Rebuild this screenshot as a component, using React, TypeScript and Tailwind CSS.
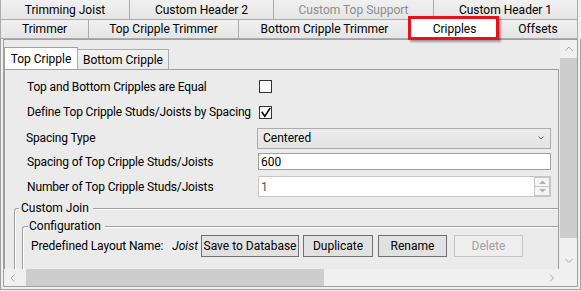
import React from 'react';

type TabDef = { label: string; w: string; disabled?: boolean; selected?: boolean };

const row1: TabDef[] = [
  { label: 'Trimming Joist', w: 'w-[130px]' },
  { label: 'Custom Header 2', w: 'w-[145px]' },
  { label: 'Custom Top Support', w: 'w-[161px]', disabled: true },
  { label: 'Custom Header 1', w: 'w-[145px]' },
];

const row2: TabDef[] = [
  { label: 'Trimmer', w: 'w-[89px]' },
  { label: 'Top Cripple Trimmer', w: 'w-[151px]' },
  { label: 'Bottom Cripple Trimmer', w: 'w-[173px]' },
  { label: 'Cripples', w: 'w-[89px]', selected: true },
  { label: 'Offsets', w: 'w-[80px]' },
];

const OuterTab = ({ tab, first }: { tab: TabDef; first: boolean }) => {
  if (tab.selected) {
    return (
      <div
        className={`${tab.w} ${first ? '' : '-ml-px'} relative z-10 h-[22px] shrink-0 border border-b-0 border-[#acacac] bg-white flex items-center justify-center pt-[1px]`}
      >
        {tab.label}
      </div>
    );
  }
  return (
    <div
      className={`${tab.w} ${first ? '' : '-ml-px'} h-full shrink-0 border border-[#acacac] bg-gradient-to-b from-[#f0f0f0] to-[#e5e5e5] flex items-center justify-center ${tab.disabled ? 'text-[#8d8d8d]' : 'text-black'}`}
    >
      {tab.label}
    </div>
  );
};

const CheckBox = ({ checked }: { checked?: boolean }) => (
  <div className="ml-[2px] w-[13px] h-[13px] border border-[#333333] bg-white relative">
    {checked && (
      <svg width="11" height="11" viewBox="0 0 11 11" className="block">
        <path d="M1.7 4.8 L4.8 9.3 L10.2 1" stroke="#000" strokeWidth="1.5" fill="none" />
      </svg>
    )}
  </div>
);

const Chevron = ({ dir, color = '#a6a6a6' }: { dir: 'up' | 'down' | 'left' | 'right'; color?: string }) => {
  const paths: Record<string, string> = {
    up: 'M0.5 4.5 L4 1 L7.5 4.5',
    down: 'M0.5 1 L4 4.5 L7.5 1',
    left: 'M4.5 0.5 L1 4 L4.5 7.5',
    right: 'M1 0.5 L4.5 4 L1 7.5',
  };
  const horiz = dir === 'up' || dir === 'down';
  return (
    <svg width={horiz ? 8 : 6} height={horiz ? 6 : 8} viewBox={horiz ? '0 0 8 6' : '0 0 6 8'}>
      <path d={paths[dir]} stroke={color} strokeWidth="1" fill="none" />
    </svg>
  );
};

const Button = ({ label, w, ml, disabled }: { label: string; w: string; ml: string; disabled?: boolean }) => (
  <div
    className={`${w} ${ml} h-[22px] shrink-0 whitespace-nowrap flex items-center justify-center border ${
      disabled ? 'border-[#c4c4c4] bg-[#eeeeee] text-[#a2a2a2]' : 'border-[#707070] bg-[#e1e1e1] text-black'
    }`}
  >
    {label}
  </div>
);

export default function App() {
  return (
    <div className="relative w-[581px] h-[291px] overflow-hidden bg-[#f0f0f0] text-[12px] leading-[16px] text-black whitespace-nowrap font-['Roboto',sans-serif]">
      {/* outer tab strip */}
      <div className="flex flex-col">
        <div className="flex h-[21px] -mt-px">
          {row1.map((t, i) => (
            <OuterTab key={t.label} tab={t} first={i === 0} />
          ))}
        </div>
        <div className="flex items-end h-[20px] -mt-px">
          {row2.map((t, i) => (
            <OuterTab key={t.label} tab={t} first={i === 0} />
          ))}
        </div>
      </div>

      {/* tab page */}
      <div className="h-[251px] border-x border-b border-[#a0a0a0] px-[2px] pb-[2px]">
        <div className="h-full border border-[#a0a0a0] flex flex-col">
          <div className="flex flex-1 min-h-0">
            {/* scroll viewport */}
            <div className="flex-1 min-w-0 overflow-hidden bg-[#ebebeb]">
              <div className="pt-[7px] flex items-end">
                <div className="w-[74px] h-[22px] border border-b-0 border-[#a0a0a0] bg-white flex items-center justify-center">
                  Top Cripple
                </div>
                <div className="-ml-px w-[92px] h-[20px] border border-b-0 border-[#acacac] bg-gradient-to-b from-[#f2f2f2] to-[#e8e8e8] flex items-center justify-center">
                  Bottom Cripple
                </div>
              </div>
              <div className="w-[555px] h-[300px] border-l border-t border-r border-[#a0a0a0] pt-[4px] pl-[22px]">
                <div className="flex items-center h-[25px]">
                  <div className="w-[230px] tracking-[-0.15px]">Top and Bottom Cripples are Equal</div>
                  <CheckBox />
                </div>
                <div className="flex items-center h-[26px]">
                  <div className="w-[230px] tracking-[-0.15px]">Define Top Cripple Studs/Joists by Spacing</div>
                  <CheckBox checked />
                </div>
                <div className="flex items-center h-[26px]">
                  <div className="w-[230px] -ml-px pl-0 tracking-[-0.15px]">Spacing Type</div>
                  <div className="ml-px w-[294px] h-[21px] border border-[#acacac] bg-gradient-to-b from-[#ececec] to-[#e4e4e4] flex items-center justify-between pl-[5px] pr-[6px]">
                    <span>Centered</span>
                    <svg width="6" height="4" viewBox="0 0 6 4">
                      <path d="M0.5 0.5 L3 3 L5.5 0.5" stroke="#606060" strokeWidth="1" fill="none" />
                    </svg>
                  </div>
                </div>
                <div className="flex items-center h-[21px]">
                  <div className="w-[230px] tracking-[-0.15px]">Spacing of Top Cripple Studs/Joists</div>
                  <div className="ml-px w-[293px] h-[17px] border border-[#a0a0a0] bg-white flex items-center pl-[2px]">
                    600
                  </div>
                </div>
                <div className="flex items-center h-[21px] mt-[4px]">
                  <div className="w-[230px] tracking-[-0.15px]">Number of Top Cripple Studs/Joists</div>
                  <div className="ml-px w-[293px] h-[21px] border border-[#c6c6c6] bg-white flex items-center justify-between pl-[2px]">
                    <span className="text-[#555555]">1</span>
                    <div className="flex flex-col w-[16px] h-full">
                      <div className="flex-1 border border-[#c6c6c6] bg-[#f4f4f4] flex items-center justify-center">
                        <svg width="7" height="4" viewBox="0 0 7 4">
                          <path d="M0 4 L3.5 0.5 L7 4 Z" fill="#b0b0b0" />
                        </svg>
                      </div>
                      <div className="flex-1 border border-t-0 border-[#c6c6c6] bg-[#f4f4f4] flex items-center justify-center">
                        <svg width="7" height="4" viewBox="0 0 7 4">
                          <path d="M0 0 L3.5 3.5 L7 0 Z" fill="#b0b0b0" />
                        </svg>
                      </div>
                    </div>
                  </div>
                </div>

                {/* Custom Join group */}
                <fieldset className="-ml-[13px] mt-[3px] border-l border-t border-[#a0a0a0] rounded-tl-[3px] pl-[7px] pt-[2px] shadow-[inset_1px_1px_0_#ffffff] h-[120px]">
                  <legend className="-ml-[3px] pl-[2px] pr-[4px] bg-[#ebebeb]">Custom Join</legend>
                  <fieldset className="border-l border-t border-[#a0a0a0] rounded-tl-[3px] pl-[8px] shadow-[inset_1px_1px_0_#ffffff] h-[80px]">
                    <legend className="-ml-[3px] pl-[1px] pr-[4px] bg-[#ebebeb]">Configuration</legend>
                    <div className="flex items-center pt-[1px]">
                      <span className="tracking-[-0.1px]">Predefined Layout Name:</span>
                      <span className="ml-[9px] italic">Joist</span>
                      <Button label="Save to Database" w="w-[98px]" ml="ml-[3px]" />
                      <Button label="Duplicate" w="w-[70px]" ml="ml-[4px]" />
                      <Button label="Rename" w="w-[69px]" ml="ml-[5px]" />
                      <Button label="Delete" w="w-[69px]" ml="ml-[7px]" disabled />
                    </div>
                  </fieldset>
                </fieldset>
              </div>
            </div>

            {/* vertical scrollbar */}
            <div className="w-[17px] shrink-0 bg-[#f0f0f0] flex flex-col">
              <div className="h-[18px] flex items-center justify-center">
                <Chevron dir="up" />
              </div>
              <div className="h-[180px] bg-[#cdcdcd]" />
              <div className="flex-1" />
              <div className="h-[17px] flex items-center justify-center">
                <Chevron dir="down" />
              </div>
            </div>
          </div>

          {/* horizontal scrollbar */}
          <div className="flex h-[17px] shrink-0">
            <div className="flex-1 flex bg-[#f0f0f0]">
              <div className="w-[17px] flex items-center justify-center">
                <Chevron dir="left" />
              </div>
              <div className="ml-[5px] w-[298px] bg-[#cdcdcd]" />
              <div className="flex-1" />
              <div className="w-[17px] flex items-center justify-center">
                <Chevron dir="right" />
              </div>
            </div>
            <div className="w-[17px] bg-[#f0f0f0]" />
          </div>
        </div>
      </div>

      {/* red annotation highlight around the Cripples tab */}
      <div className="absolute left-[408px] top-[16px] w-[91px] h-[24px] border-[3px] border-[#e8101a] shadow-[2px_2px_2px_rgba(0,0,0,0.35)] z-20" />
    </div>
  );
}
